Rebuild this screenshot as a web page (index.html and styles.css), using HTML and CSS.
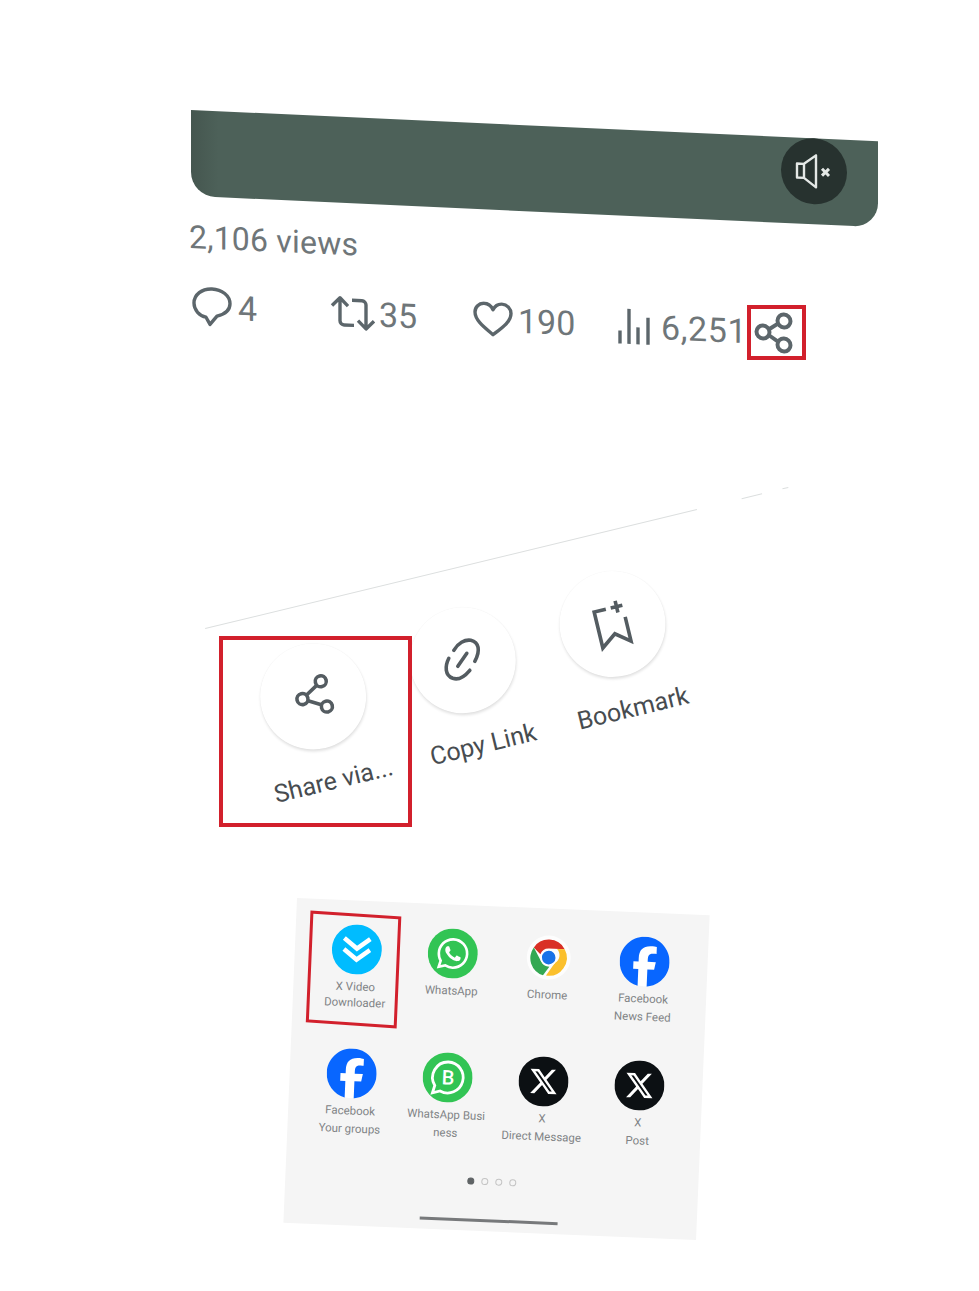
FILE: index.html
```html
<!DOCTYPE html>
<html lang="en">
<head>
<meta charset="utf-8">
<title>Share via X Video Downloader</title>
<link rel="stylesheet" href="styles.css">
</head>
<body>
<main class="page">
  <section class="tweet">
    <div class="video">
      <button class="mute" aria-label="Unmute">
        <svg width="40" height="40" viewBox="0 0 40 40" fill="none" stroke="#e4e8e6" stroke-width="2.400" stroke-linejoin="round"><path d="M3 13h7v14H3zM10 13 22 4v32L10 27"/><path d="m28 17 7 7m0-7-7 7" stroke-width="3"/></svg>
      </button>
    </div>
    <p class="views">2,106 views</p>
    <div class="stats">
      <div class="stat">
        <svg class="stat-icon" width="42" height="42" viewBox="0 0 42 42" fill="none" stroke="#5c666b" stroke-width="3.400" stroke-linejoin="round"><path d="M21 3C11 3 3 9.500 3 18c0 7 5.500 12.500 12 13.500l4 7 7-8.500c7-2 13-6 13-13C39 9 31 3 21 3z"/></svg>
        <span>4</span>
      </div>
      <div class="stat stat-tight">
        <svg class="stat-icon" width="46" height="36" viewBox="0 0 46 36" fill="none" stroke="#5c666b" stroke-width="3.400" stroke-linejoin="round"><path d="M2 11 10 3l8 8M10 3v23a4 4 0 0 0 4 4h10M22 5h10a4 4 0 0 1 4 4v24M28 25l8 8 8-8"/></svg>
        <span>35</span>
      </div>
      <div class="stat">
        <svg class="stat-icon" width="40" height="36" viewBox="0 0 40 36" fill="none" stroke="#5c666b" stroke-width="3.400" stroke-linejoin="round"><path d="M20 33C10 25 2 19 2 11 2 6 6 2 11 2c4 0 7 2 9 6 2-4 5-6 9-6 5 0 9 4 9 9 0 8-8 14-18 22z"/></svg>
        <span>190</span>
      </div>
      <div class="stat stat-wide">
        <svg class="stat-icon" width="34" height="38" viewBox="0 0 34 38" fill="none" stroke="#5c666b" stroke-width="3.400"><path d="M3 24v13M12 2v35M21 20v17M31 10v27"/></svg>
        <span>6,251</span>
      </div>
      <svg class="share-icon" width="40" height="42" viewBox="0 0 40 42" fill="none" stroke="#5c666b" stroke-width="4"><circle cx="9" cy="21" r="6.500"/><circle cx="30" cy="9" r="6.500"/><circle cx="30" cy="33" r="6.500"/><path d="m15 18 9-6M15 24l9 6"/></svg>
    </div>
  </section>

  <section class="actions">
    <div class="divider">
      <span class="rule rule-long"></span>
      <span class="rule rule-mid"></span>
      <span class="rule rule-short"></span>
    </div>
    <div class="action-row">
      <div class="action">
        <div class="action-circle">
          <svg width="44" height="44" viewBox="0 0 44 44" fill="none" stroke="#545c61" stroke-width="3.600"><circle cx="11" cy="22" r="5.500"/><circle cx="33" cy="9" r="5.500"/><circle cx="33" cy="35" r="5.500"/><path d="m16 19 12-7M16 25l12 7"/></svg>
        </div>
        <span class="action-label">Share via...</span>
      </div>
      <div class="action">
        <div class="action-circle">
          <svg width="44" height="44" viewBox="0 0 44 44" fill="none" stroke="#545c61" stroke-width="3.600" stroke-linecap="round"><g transform="rotate(13.600 22 22)"><path d="M13 12C17 5 24 1 30 2c8 2 10 10 4 21M8 20C4 28 4 37 12 40c6 2 12-2 17-8M17 28l9-13"/></g></svg>
        </div>
        <span class="action-label">Copy Link</span>
      </div>
      <div class="action">
        <div class="action-circle">
          <svg width="46" height="50" viewBox="0 0 46 50" fill="none" stroke="#545c61" stroke-width="3.600"><path d="M20 9H8v37l15-11 14 11V21M25 9h12M31 3v12"/></svg>
        </div>
        <span class="action-label">Bookmark</span>
      </div>
    </div>
  </section>

  <section class="sheet">
    <div class="apps">
      <div class="app">
        <svg class="app-icon" viewBox="0 0 50 50"><circle cx="25" cy="25" r="25" fill="#00bcff"/><path d="m12 14 13 10 13-10M12 25l13 10 13-10" fill="none" stroke="#fff" stroke-width="4.500"/></svg>
        <span class="app-label app-label-tight">X Video<br>Downloader</span>
      </div>
      <div class="app">
        <svg class="app-icon" viewBox="0 0 50 50"><circle cx="25" cy="25" r="25" fill="#32c454"/><path transform="translate(9.500 9.500) scale(1.3)" fill="#fff" d="M17.472 14.382c-.297-.149-1.758-.867-2.03-.967-.273-.099-.471-.148-.67.15-.197.297-.767.966-.94 1.164-.173.199-.347.223-.644.075-.297-.15-1.255-.463-2.39-1.475-.883-.788-1.48-1.761-1.653-2.059-.173-.297-.018-.458.13-.606.134-.133.298-.347.446-.52.149-.174.198-.298.298-.497.099-.198.05-.371-.025-.52-.075-.149-.669-1.612-.916-2.207-.242-.579-.487-.5-.669-.51-.173-.008-.371-.01-.57-.01-.198 0-.52.074-.792.372-.272.297-1.04 1.016-1.04 2.479 0 1.462 1.065 2.875 1.213 3.074.149.198 2.096 3.2 5.077 4.487.709.306 1.262.489 1.694.625.712.227 1.36.195 1.871.118.571-.085 1.758-.719 2.006-1.413.248-.694.248-1.289.173-1.413-.074-.124-.272-.198-.57-.347m-5.421 7.403h-.004a9.87 9.87 0 01-5.031-1.378l-.361-.214-3.741.982.998-3.648-.235-.374a9.86 9.86 0 01-1.51-5.26c.001-5.45 4.436-9.884 9.888-9.884 2.64 0 5.122 1.03 6.988 2.898a9.825 9.825 0 012.893 6.994c-.003 5.45-4.437 9.884-9.885 9.884m8.413-18.297A11.815 11.815 0 0012.05 0C5.495 0 .16 5.335.157 11.892c0 2.096.547 4.142 1.588 5.945L.057 24l6.305-1.654a11.882 11.882 0 005.683 1.448h.005c6.554 0 11.89-5.335 11.893-11.893a11.821 11.821 0 00-3.48-8.413z"/></svg>
        <span class="app-label">WhatsApp</span>
      </div>
      <div class="app">
        <svg class="app-icon" viewBox="0 0 50 50"><circle cx="25" cy="25" r="22" fill="#fff" opacity="0.8"/><path d="M25 7a18 18 0 0 1 15.600 9H25a9 9 0 0 0-8.500 6L9.700 15.500A18 18 0 0 1 25 7z" fill="#d93025"/><path d="M9.700 15.500 17.500 29a9 9 0 0 0 8.500 5l-6 9A18 18 0 0 1 9.700 15.500z" fill="#34a853"/><path d="M40.600 16A18 18 0 0 1 23 43l8.500-13a9 9 0 0 0 1.500-14z" fill="#fbc02d"/><circle cx="25" cy="25" r="8.500" fill="#fff"/><circle cx="25" cy="25" r="6.800" fill="#1a73e8"/></svg>
        <span class="app-label">Chrome</span>
      </div>
      <div class="app">
        <svg class="app-icon" viewBox="0 0 24 24"><circle cx="12" cy="12" r="11.900" fill="#fff"/><path fill="#0866ff" d="M9.101 23.691v-7.98H6.627v-3.667h2.474v-1.58c0-4.085 1.848-5.978 5.858-5.978.401 0 .955.042 1.468.103a8.68 8.68 0 0 1 1.141.195v3.325a8.623 8.623 0 0 0-.653-.036 26.805 26.805 0 0 0-.733-.009c-.707 0-1.259.096-1.675.309a1.686 1.686 0 0 0-.679.622c-.258.42-.374.995-.374 1.752v1.297h3.919l-.386 2.103-.287 1.564h-3.246v8.245C19.396 23.238 24 18.179 24 12.044c0-6.627-5.373-12-12-12s-12 5.373-12 12c0 5.628 3.874 10.35 9.101 11.647Z"/></svg>
        <span class="app-label">Facebook<br>News Feed</span>
      </div>
      <div class="app">
        <svg class="app-icon" viewBox="0 0 24 24"><circle cx="12" cy="12" r="11.900" fill="#fff"/><path fill="#0866ff" d="M9.101 23.691v-7.98H6.627v-3.667h2.474v-1.58c0-4.085 1.848-5.978 5.858-5.978.401 0 .955.042 1.468.103a8.68 8.68 0 0 1 1.141.195v3.325a8.623 8.623 0 0 0-.653-.036 26.805 26.805 0 0 0-.733-.009c-.707 0-1.259.096-1.675.309a1.686 1.686 0 0 0-.679.622c-.258.42-.374.995-.374 1.752v1.297h3.919l-.386 2.103-.287 1.564h-3.246v8.245C19.396 23.238 24 18.179 24 12.044c0-6.627-5.373-12-12-12s-12 5.373-12 12c0 5.628 3.874 10.35 9.101 11.647Z"/></svg>
        <span class="app-label">Facebook<br>Your groups</span>
      </div>
      <div class="app">
        <svg class="app-icon" viewBox="0 0 50 50"><circle cx="25" cy="25" r="25" fill="#32c454"/><path d="M25 9.500a15.500 15.500 0 1 1-7 29.300L10.500 41l2-7.500A15.500 15.500 0 0 1 25 9.500z" fill="none" stroke="#fff" stroke-width="2.800"/><text class="biz-mark" x="25.500" y="32" text-anchor="middle">B</text></svg>
        <span class="app-label">WhatsApp Busi<br>ness</span>
      </div>
      <div class="app">
        <svg class="app-icon" viewBox="0 0 50 50"><circle cx="25" cy="25" r="25" fill="#0c1013"/><path transform="translate(10 10) scale(1.25)" fill="#fff" d="M18.244 2.25h3.308l-7.227 8.26 8.502 11.24H16.170l-5.214-6.817L4.990 21.750H1.680l7.730-8.835L1.254 2.250H8.080l4.713 6.231zm-1.161 17.520h1.833L7.084 4.126H5.117z"/></svg>
        <span class="app-label">X<br>Direct Message</span>
      </div>
      <div class="app">
        <svg class="app-icon" viewBox="0 0 50 50"><circle cx="25" cy="25" r="25" fill="#0c1013"/><path transform="translate(10 10) scale(1.25)" fill="#fff" d="M18.244 2.25h3.308l-7.227 8.26 8.502 11.24H16.170l-5.214-6.817L4.990 21.750H1.680l7.730-8.835L1.254 2.250H8.080l4.713 6.231zm-1.161 17.520h1.833L7.084 4.126H5.117z"/></svg>
        <span class="app-label">X<br>Post</span>
      </div>
    </div>
    <div class="dots">
      <span class="dot dot-active"></span><span class="dot"></span><span class="dot"></span><span class="dot"></span>
    </div>
    <div class="home-bar"></div>
    <div class="mark mark-app"></div>
  </section>

  <div class="mark mark-share"></div>
  <div class="mark mark-via"></div>
</main>
</body>
</html>
```
FILE: styles.css
```css
* {
  box-sizing: border-box;
}

html,
body {
  margin: 0;
  background: #fff;
}

.page {
  position: relative;
  height: 1291px;
  overflow: hidden;
  display: flex;
  flex-direction: column;
  align-items: flex-start;
  font-family: Roboto, "Liberation Sans", sans-serif;
}

/* Tweet card */
.tweet {
  width: 687px;
  height: 240px;
  margin: 110px 0 0 191px;
  transform: skewY(2.6deg);
  transform-origin: 0 0;
  color: #6f7679;
}

.video {
  position: relative;
  height: 86px;
  background: linear-gradient(90deg, #45564f 0, #4d6159 4%, #4d6159 100%);
  border-radius: 0 0 24px 24px;
}

.mute {
  position: absolute;
  top: 0;
  right: 31px;
  width: 66px;
  height: 66px;
  padding: 0;
  border: 0;
  border-radius: 50%;
  background: #27322f;
  display: flex;
  align-items: center;
  justify-content: center;
}

.views {
  margin: 21px 0 0 -2px;
  font-size: 32px;
  line-height: 40px;
  letter-spacing: 0.2px;
}

.stats {
  display: grid;
  grid-template-columns: 139px 143px 144px 137px auto;
  align-items: center;
  margin-top: 27px;
  height: 44px;
  font-size: 34px;
  line-height: 40px;
}

.stat {
  display: flex;
  align-items: center;
  gap: 5px;
}

.stat-tight {
  gap: 3px;
}

.stat-wide {
  gap: 10px;
  letter-spacing: 0.6px;
}

.stat-icon,
.share-icon {
  flex: none;
  display: block;
}

/* Action row */
.actions {
  width: 600px;
  margin: 278px 0 0 205px;
  transform: rotate(-13.6deg);
  transform-origin: 0 0;
}

.divider {
  display: flex;
  align-items: flex-start;
  height: 1px;
}

.rule {
  display: block;
  height: 1px;
  background: #dcdfdf;
}

.rule-long {
  width: 509px;
}

.rule-mid {
  width: 21px;
  margin-left: 46px;
}

.rule-short {
  width: 6px;
  margin-left: 21px;
}

.action-row {
  display: flex;
  margin: 38px 0 0 12px;
}

.action {
  width: 154px;
  display: flex;
  flex-direction: column;
  align-items: center;
}

.action-circle {
  width: 106px;
  height: 106px;
  border-radius: 50%;
  background: #fff;
  box-shadow: 0 2px 3px rgba(0, 0, 0, 0.12), 0 0 1px rgba(0, 0, 0, 0.06);
  display: flex;
  align-items: center;
  justify-content: center;
}

.action-label {
  margin-top: 18px;
  font-size: 25px;
  line-height: 32px;
  color: #474c50;
  white-space: nowrap;
}

/* Share sheet */
.sheet {
  position: relative;
  width: 413px;
  height: 325px;
  margin: 75px 0 0 297px;
  padding: 24px 0 0 14px;
  background: #f5f5f5;
  transform: rotate(2.4deg);
  transform-origin: 0 0;
}

.apps {
  display: grid;
  grid-template-columns: repeat(4, 96px);
  grid-auto-rows: 124px;
}

.app {
  display: flex;
  flex-direction: column;
  align-items: center;
}

.app-icon {
  display: block;
  width: 50px;
  height: 50px;
  flex: none;
}

.app-label {
  margin-top: 3px;
  font-size: 11.5px;
  line-height: 18px;
  color: #808385;
  text-align: center;
  white-space: nowrap;
}

.app-label-tight {
  line-height: 16px;
  margin-top: 4px;
}

.biz-mark {
  font-family: Roboto, "Liberation Sans", sans-serif;
  font-size: 20px;
  font-weight: 500;
  fill: #fff;
}

.dots {
  display: flex;
  justify-content: center;
  gap: 7px;
  margin-left: -14px;
}

.dot {
  width: 7px;
  height: 7px;
  border-radius: 50%;
  border: 1px solid #c4c4c4;
}

.dot-active {
  background: #5f6365;
  border-color: #5f6365;
}

.home-bar {
  width: 138px;
  height: 3px;
  margin: 34px 0 0 122px;
  background: #77797b;
}

/* Red annotation frames */
.mark {
  position: absolute;
  border: 4px solid #d2202c;
}

.mark-share {
  left: 747px;
  top: 305px;
  width: 59px;
  height: 55px;
}

.mark-via {
  left: 219px;
  top: 636px;
  width: 193px;
  height: 191px;
}

.mark-app {
  left: 14px;
  top: 13px;
  width: 91px;
  height: 112px;
  border-width: 3px;
  transform: skewY(1.4deg);
}
```
